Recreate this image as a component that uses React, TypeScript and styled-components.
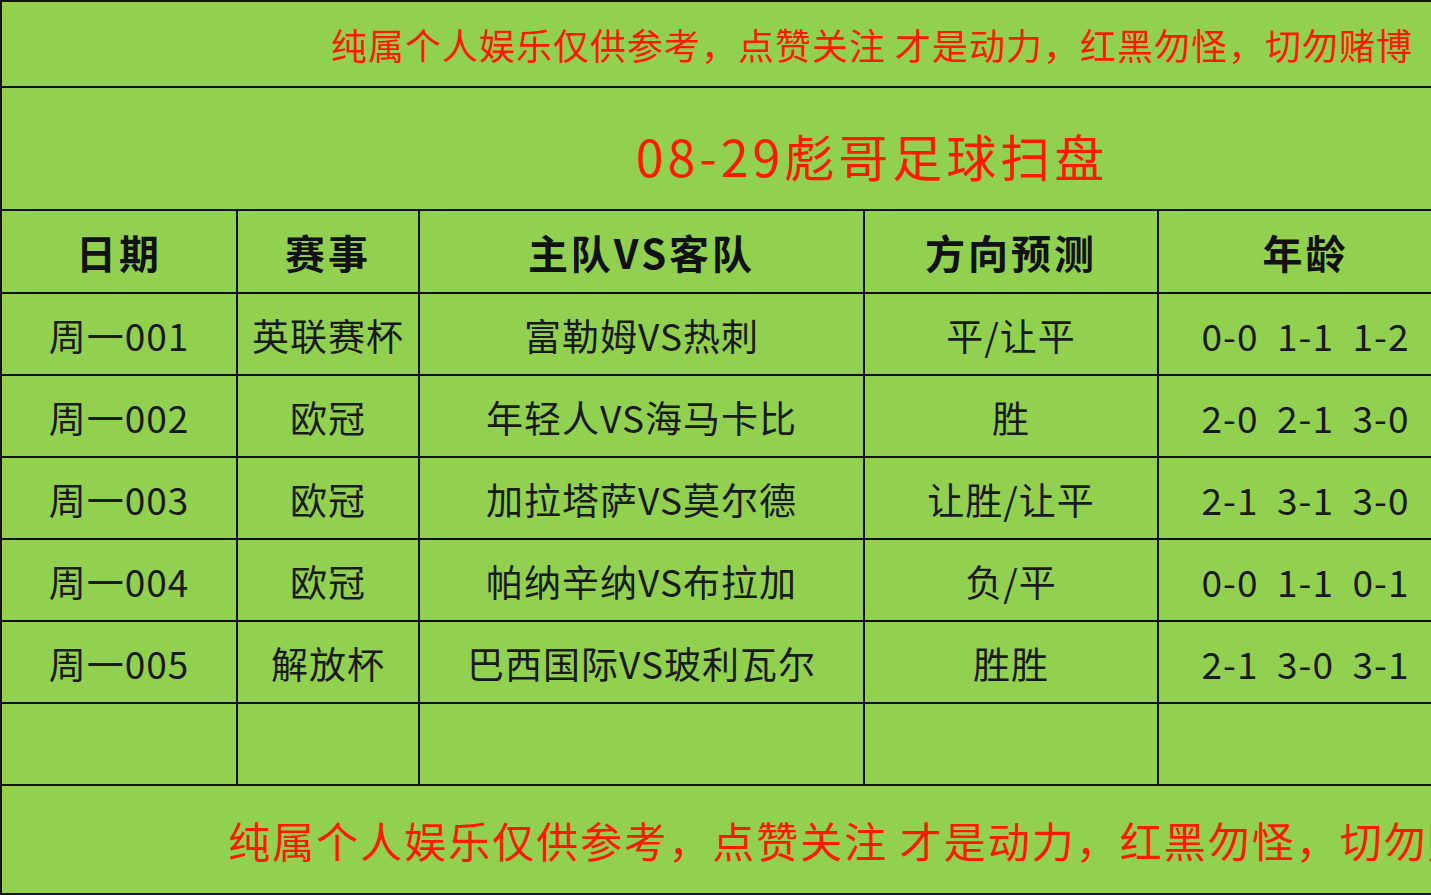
import styled, { createGlobalStyle } from 'styled-components'

const GlobalStyle = createGlobalStyle`
  html, body {
    margin: 0;
    padding: 0;
    overflow: hidden;
    background: #92d050;
  }
  body {
    font-family: "Noto Sans CJK SC", "Noto Sans", sans-serif;
  }
`

const Sheet = styled.div`
  display: grid;
  grid-template-columns: 236px 182px 445px 294px 295px 290px;
  grid-template-rows: 86px 123px 83px repeat(6, 82px) 109px;
  width: max-content;
  background: #92d050;
  border-top: 2px solid #111;
  border-left: 2px solid #111;
`

const Cell = styled.div<{ $span?: boolean }>`
  box-sizing: border-box;
  grid-column: ${(p) => (p.$span ? '1 / -1' : 'auto')};
  display: flex;
  align-items: center;
  justify-content: center;
  border-right: 2px solid #111;
  border-bottom: 2px solid #111;
  white-space: pre;
  overflow: hidden;
`

const Notice = styled(Cell)<{ $size: number; $spacing: number }>`
  color: #ff1a00;
  font-size: ${(p) => p.$size}px;
  letter-spacing: ${(p) => p.$spacing}px;
`

const Title = styled(Cell)`
  color: #ff1a00;
  font-size: 50px;
  letter-spacing: 4px;
  padding-top: 12px;
`

const HeadCell = styled(Cell)`
  color: #111;
  font-size: 40px;
  font-weight: 700;
  letter-spacing: 3px;
`

const DataCell = styled(Cell)`
  color: #1a1a1a;
  font-size: 37px;
  letter-spacing: 1px;
  padding-top: 2px;
`

const notice = '纯属个人娱乐仅供参考，点赞关注 才是动力，红黑勿怪，切勿赌博'

const headers = ['日期', '赛事', '主队VS客队', '方向预测', '年龄', '']

const rows = [
  ['周一001', '英联赛杯', '富勒姆VS热刺', '平/让平', '0-0  1-1  1-2'],
  ['周一002', '欧冠', '年轻人VS海马卡比', '胜', '2-0  2-1  3-0'],
  ['周一003', '欧冠', '加拉塔萨VS莫尔德', '让胜/让平', '2-1  3-1  3-0'],
  ['周一004', '欧冠', '帕纳辛纳VS布拉加', '负/平', '0-0  1-1  0-1'],
  ['周一005', '解放杯', '巴西国际VS玻利瓦尔', '胜胜', '2-1  3-0  3-1'],
  ['', '', '', '', ''],
]

const App: React.FC = () => {
  return (
    <>
      <GlobalStyle />
      <Sheet>
        <Notice $span $size={36} $spacing={1}>
          {notice}
        </Notice>
        <Title $span>08-29彪哥足球扫盘</Title>

        {headers.map((h, i) => (
          <HeadCell key={i}>{h}</HeadCell>
        ))}

        {rows.map((row, r) =>
          [...row, ''].map((v, c) => <DataCell key={`${r}-${c}`}>{v}</DataCell>)
        )}

        <Notice $span $size={42} $spacing={2}>
          {notice}
        </Notice>
      </Sheet>
    </>
  )
}

export default App
